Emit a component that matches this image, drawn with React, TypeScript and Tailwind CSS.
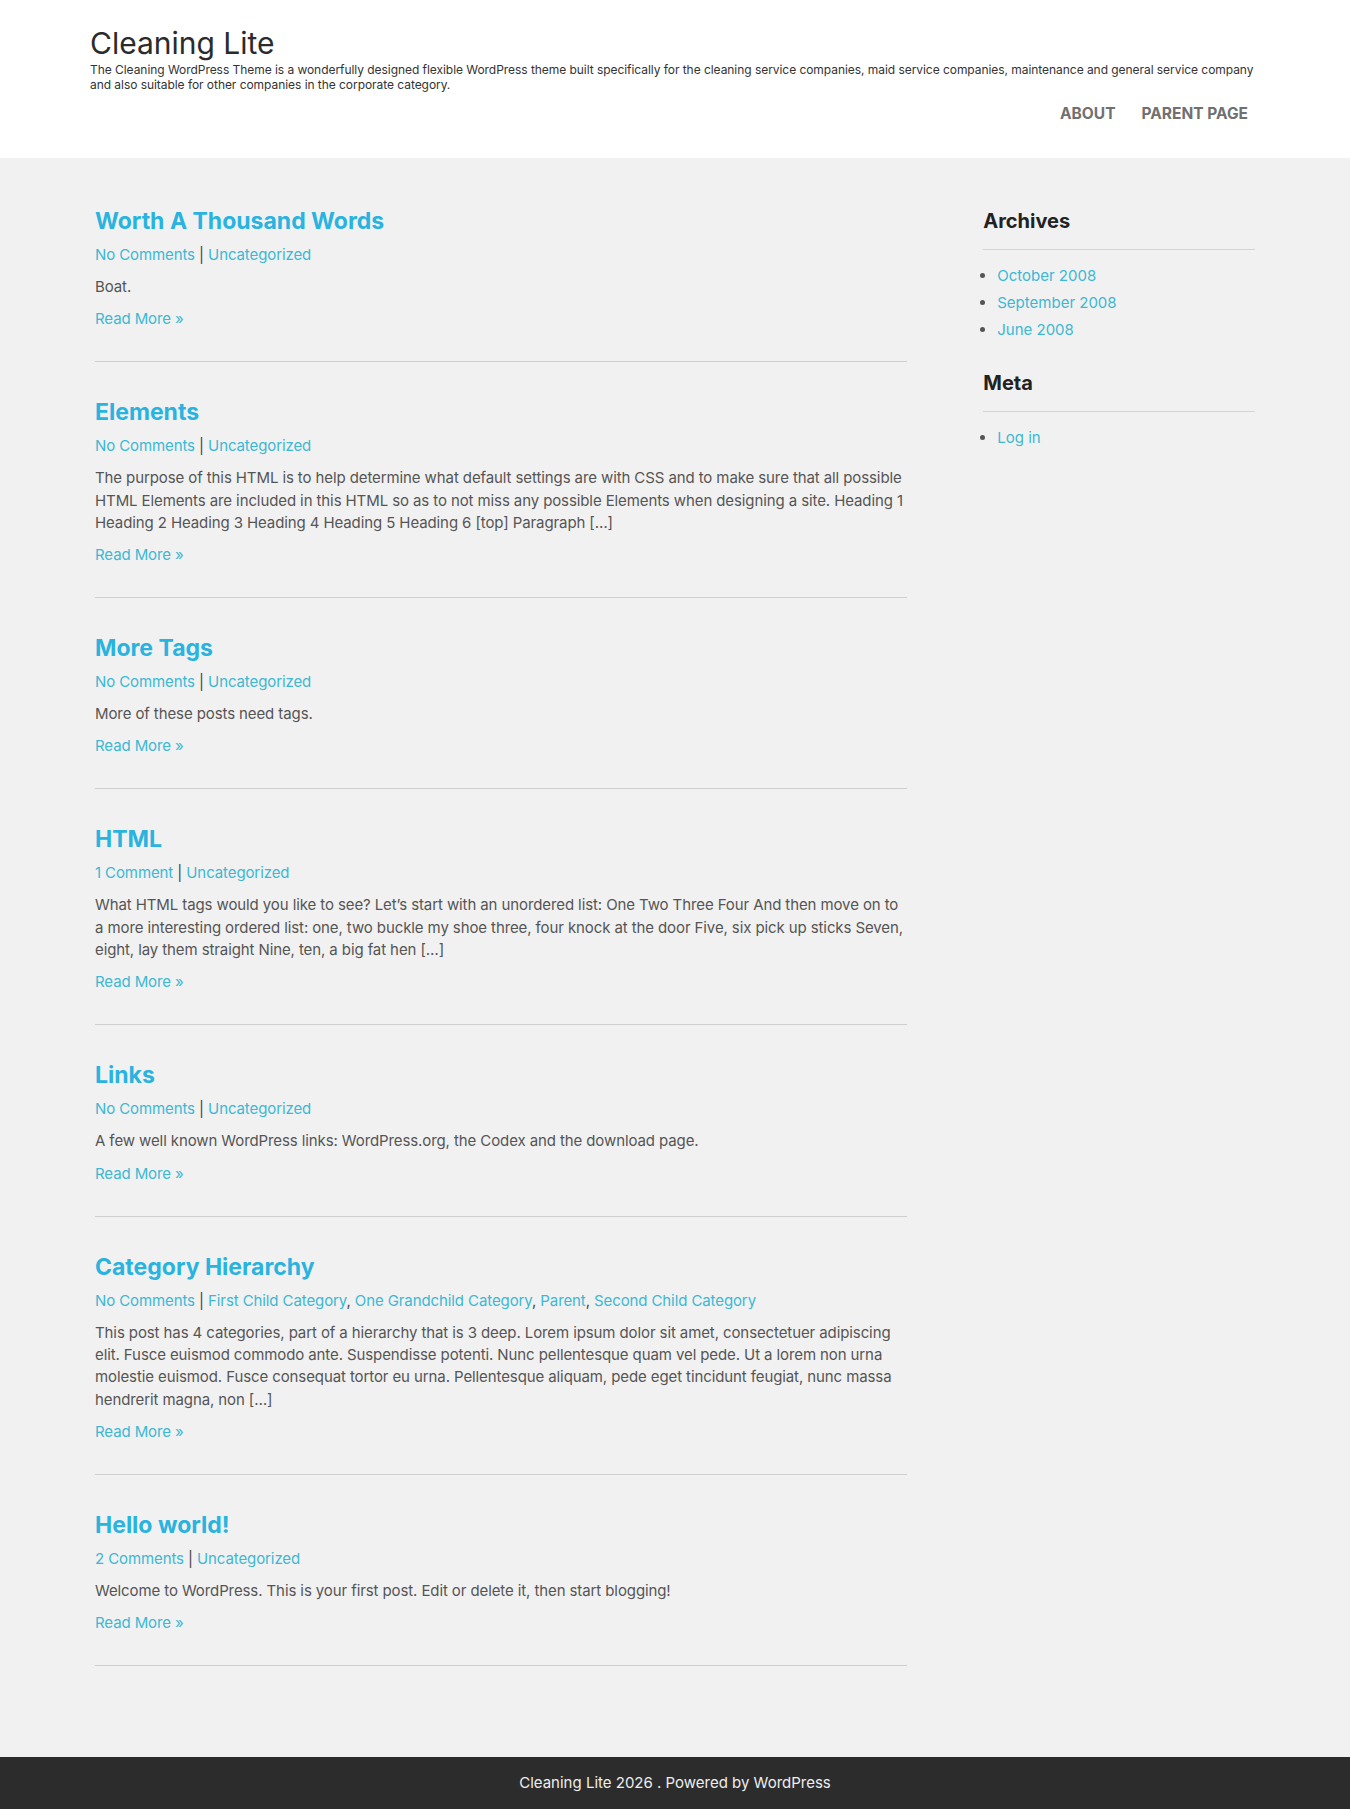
const posts = [
  {
    title: 'Worth A Thousand Words',
    comments: 'No Comments',
    cats: ['Uncategorized'],
    excerpt: 'Boat.',
  },
  {
    title: 'Elements',
    comments: 'No Comments',
    cats: ['Uncategorized'],
    excerpt:
      'The purpose of this HTML is to help determine what default settings are with CSS and to make sure that all possible HTML Elements are included in this HTML so as to not miss any possible Elements when designing a site. Heading 1 Heading 2 Heading 3 Heading 4 Heading 5 Heading 6 [top] Paragraph […]',
  },
  {
    title: 'More Tags',
    comments: 'No Comments',
    cats: ['Uncategorized'],
    excerpt: 'More of these posts need tags.',
  },
  {
    title: 'HTML',
    comments: '1 Comment',
    cats: ['Uncategorized'],
    excerpt:
      'What HTML tags would you like to see? Let’s start with an unordered list: One Two Three Four And then move on to a more interesting ordered list: one, two buckle my shoe three, four knock at the door Five, six pick up sticks Seven, eight, lay them straight Nine, ten, a big fat hen […]',
  },
  {
    title: 'Links',
    comments: 'No Comments',
    cats: ['Uncategorized'],
    excerpt: 'A few well known WordPress links: WordPress.org, the Codex and the download page.',
  },
  {
    title: 'Category Hierarchy',
    comments: 'No Comments',
    cats: ['First Child Category', 'One Grandchild Category', 'Parent', 'Second Child Category'],
    excerpt:
      'This post has 4 categories, part of a hierarchy that is 3 deep. Lorem ipsum dolor sit amet, consectetuer adipiscing elit. Fusce euismod commodo ante. Suspendisse potenti. Nunc pellentesque quam vel pede. Ut a lorem non urna molestie euismod. Fusce consequat tortor eu urna. Pellentesque aliquam, pede eget tincidunt feugiat, nunc massa hendrerit magna, non […]',
  },
  {
    title: 'Hello world!',
    comments: '2 Comments',
    cats: ['Uncategorized'],
    excerpt: 'Welcome to WordPress. This is your first post. Edit or delete it, then start blogging!',
  },
]

const archives = ['October 2008', 'September 2008', 'June 2008']

function Post({ post }: { post: (typeof posts)[number] }) {
  return (
    <article className="border-b border-[#cfcfcf] pb-[31px] mb-[35px]">
      <h2 className="text-[23px] leading-[30px] font-bold text-[#2ab3df]">
        <a href="#">{post.title}</a>
      </h2>
      <div className="mt-[8px] text-[15px] leading-[22px] text-[#444] tracking-[-0.1px]">
        <a href="#" className="text-[#3cb8d4]">{post.comments}</a>
        {' | '}
        {post.cats.map((c, i) => (
          <span key={c}>
            {i > 0 && ', '}
            <a href="#" className="text-[#3cb8d4]">{c}</a>
          </span>
        ))}
      </div>
      <p className="mt-[10px] text-[15px] leading-[22.3px] text-[#555] tracking-[-0.1px]">{post.excerpt}</p>
      <a href="#" className="block mt-[10px] text-[15px] leading-[22px] text-[#3cb8d4] tracking-[-0.1px]">
        Read More »
      </a>
    </article>
  )
}

function Widget({ title, items }: { title: string; items: string[] }) {
  return (
    <section className="mb-[25px]">
      <h3 className="text-[20px] leading-[30px] font-bold text-[#222]">{title}</h3>
      <div className="mt-[13px] border-t border-[#d4d4d4]" />
      <ul className="mt-[12px] list-disc pl-[14px] text-[#555] text-[15px] leading-[27px]">
        {items.map((it) => (
          <li key={it}>
            <a href="#" className="text-[#3cb8d4]">{it}</a>
          </li>
        ))}
      </ul>
    </section>
  )
}

export default function App() {
  return (
    <div className="min-h-screen bg-[#f1f1f1] font-['Inter','Noto_Sans',sans-serif]">
      <header className="bg-white">
        <div className="w-[1170px] mx-auto pt-[25px] pb-[34px]">
          <h1 className="text-[30px] leading-[36px] text-[#2b2b2b]">Cleaning Lite</h1>
          <p className="mt-[1px] text-[12px] leading-[15px] text-[#333] tracking-[-0.05px]">
            The Cleaning WordPress Theme is a wonderfully designed flexible WordPress theme built specifically for the
            cleaning service companies, maid service companies, maintenance and general service company and also
            suitable for other companies in the corporate category.
          </p>
          <nav className="mt-[12px] flex justify-end gap-[26px] pr-[12px] text-[15.5px] leading-[20px] font-bold text-[#707070] uppercase">
            <a href="#">About</a>
            <a href="#">Parent Page</a>
          </nav>
        </div>
      </header>

      <main className="w-[1170px] mx-auto px-[5px] pt-[48px] pb-[56px] flex gap-[76px]">
        <div className="w-[813px]">
          {posts.map((p) => (
            <Post key={p.title} post={p} />
          ))}
        </div>
        <aside className="w-[272px]">
          <Widget title="Archives" items={archives} />
          <Widget title="Meta" items={['Log in']} />
        </aside>
      </main>

      <footer className="bg-[#2c2c2c] h-[52px] flex items-center justify-center text-[15px] text-[#eee]">
        Cleaning Lite 2026 . Powered by WordPress
      </footer>
    </div>
  )
}
